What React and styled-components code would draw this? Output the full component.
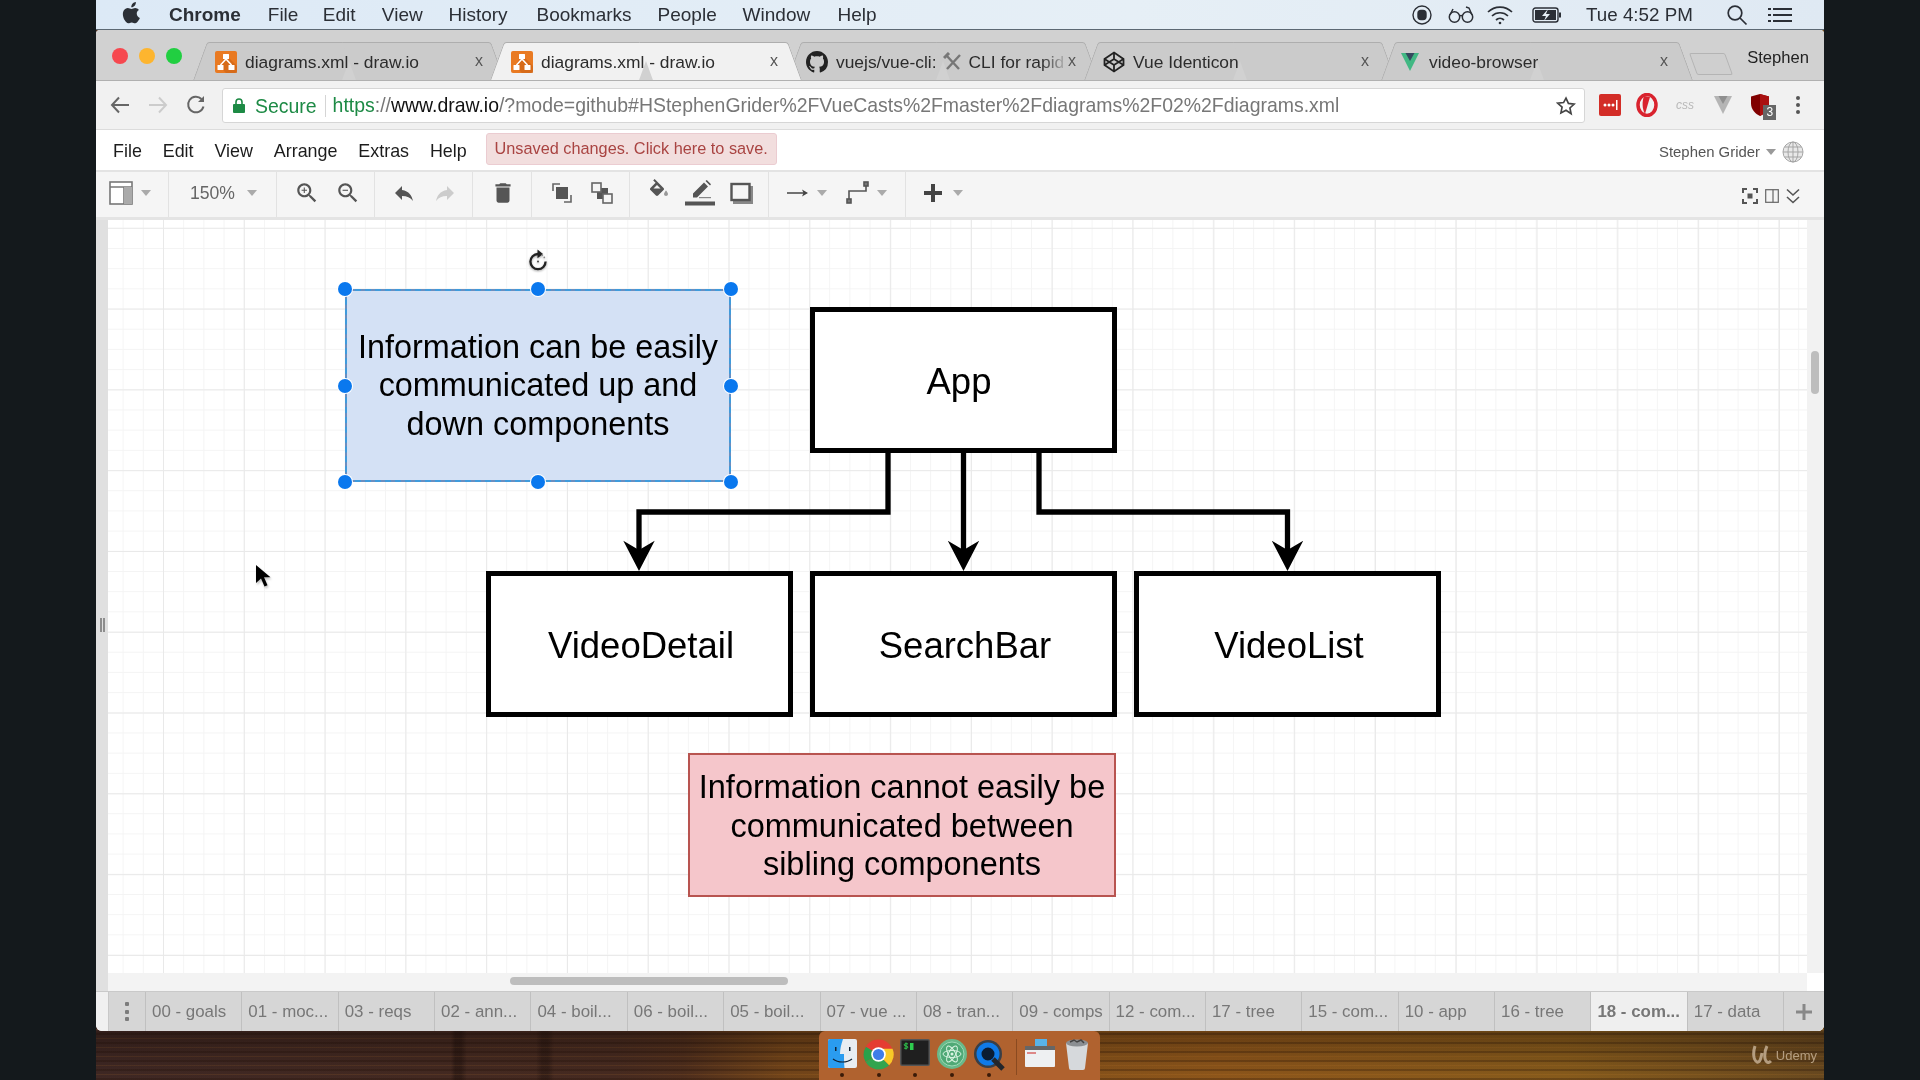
import React from "react";
import styled, { createGlobalStyle } from "styled-components";

const Global = createGlobalStyle`
  html, body { margin: 0; padding: 0; background: #14191c; }
  * { box-sizing: border-box; }
  body { font-family: "Liberation Sans", Arial, sans-serif; }
`;

const Screen = styled.div`
  width: 1920px; height: 1080px; overflow: hidden; background: #14191c;
  display: flex; justify-content: center; position: relative;
`;
const Stage = styled.div`
  width: 1728px; height: 1080px; display: flex; flex-direction: column; position: relative; filter: blur(.45px);
  background:
    linear-gradient(180deg, rgba(0,0,0,0) 0 1030px, rgba(15,6,2,.32) 1032px, rgba(15,6,2,.12) 1058px, rgba(40,10,0,0) 1080px),
    repeating-linear-gradient(0deg, rgba(30,12,4,.26) 0 2px, transparent 2px 5px, rgba(240,150,50,.1) 5px 6px, transparent 6px 9px),
    linear-gradient(90deg, transparent 0 355px, rgba(20,10,8,.4) 359px 365px, transparent 371px 440px, rgba(20,10,8,.35) 446px 452px, transparent 458px),
    linear-gradient(90deg, #3f2824 0%, #472b21 30%, #4e2e1d 34%, #74461a 40%, #82501a 50%, #8f571b 65%, #885c1c 85%, #6a4a20 100%);
`;

/* mac menu bar */
const MenuBar = styled.div`
  height: 30px; flex: none; display: flex; align-items: center; padding-left: 26px; padding-right: 32px;
  background: linear-gradient(90deg, #dce9f6, #e6eff6 60%, #dfe9f3); color: #2b2f36; font-size: 19px;
  border-bottom: 1px solid #5c6873;
`;
const MacItem = styled.span`
  margin-left: ${p => p.$ml}px; font-weight: ${p => (p.$bold ? 700 : 400)}; white-space: nowrap;
`;
const MenuSpacer = styled.span`
  flex: 1;
`;
const StatusSlot = styled.span`
  margin-left: ${p => p.$ml}px; width: ${p => p.$w}px; height: 24px; display: flex; align-items: center; justify-content: center; flex: none;
`;
const Clock = styled.span`
  margin-left: 24px; width: 110px; white-space: nowrap; color: #2b2f36; font-size: 18.8px;
`;

/* browser chrome */
const Window = styled.div`
  flex: none; height: 1001px; display: flex; flex-direction: column; overflow: hidden;
  border-radius: 4px 4px 6px 6px; background: #fff;
`;
const TabStrip = styled.div`
  height: 51px; flex: none; display: flex; align-items: flex-end; background: #d1d1d1; position: relative;
  border-bottom: 1px solid #b0b0b0;
`;
const Lights = styled.div`
  width: 104px; height: 50px; flex: none; display: flex; gap: 11px; padding: 18px 0 0 16px;
`;
const Light = styled.span`
  width: 16px; height: 16px; border-radius: 50%; background: ${p => p.$c};
`;
const Tab = styled.div`
  width: 297px; height: 38px; flex: none; position: relative; display: flex; align-items: center; z-index: ${p => (p.$on ? 2 : 1)};
  padding: 2px 22px 0 ${p => p.$pl}px; color: #2c2c2c; font-size: 17.4px;
  &::before, &::after {
    content: ""; position: absolute; top: 0; bottom: 0; z-index: -1;
    background: ${p => (p.$on ? "#f1f1f1" : "#cbcbcb")}; border-top: 1px solid #aeaeae;
  }
  &::before { left: 0; right: 50%; transform: skewX(-20deg); border-left: 1px solid #aeaeae; border-top-left-radius: 3px; }
  &::after { right: 0; left: 50%; transform: skewX(20deg); border-right: 1px solid #aeaeae; border-top-right-radius: 3px; }
`;
const TabTitle = styled.span`
  margin-left: ${p => p.$ml || 8}px; white-space: nowrap; overflow: hidden; flex: 1; display: flex; align-items: center; gap: 6px;
  ${p => p.$fade && "-webkit-mask-image: linear-gradient(90deg,#000 88%,transparent); mask-image: linear-gradient(90deg,#000 88%,transparent);"}
`;
const TabClose = styled.span`
  position: absolute; right: ${p => p.$r}px; top: 11px; font-size: 16px; color: #555; line-height: 16px;
`;
const NewTab = styled.div`
  width: 36px; height: 22px; margin: 0 0 5px 8px; flex: none; background: #cfcfcf; border: 1px solid #b4b4b4; border-radius: 2px;
  transform: skewX(20deg);
`;
const Profile = styled.div`
  position: absolute; right: 15px; top: 18px; font-size: 16.6px; color: #222;
`;

const AddressRow = styled.div`
  height: 49px; flex: none; display: flex; align-items: center; padding-left: 5px; background: #f1f1f1; border-bottom: 1px solid #dcdcdc;
`;
const NavBtn = styled.div`
  width: 38px; height: 30px; flex: none; display: flex; align-items: center; justify-content: center;
`;
const Omnibox = styled.div`
  margin-left: 7px; width: 1363px; height: 35px; flex: none; background: #fff; border: 1px solid #d6d6d6; border-radius: 3px;
  display: flex; align-items: center; padding: 1px 0 0 10px; font-size: 19.45px; color: #777; white-space: nowrap;
`;
const Secure = styled.span`
  color: #1d8a45; margin-left: 10px; padding-right: 8px; border-right: 1px solid #d5d5d5; line-height: 22px;
`;
const Url = styled.span`
  margin-left: 7px; flex: 1;
`;
const UrlGreen = styled.span` color: #1d8a45; `;
const UrlDark = styled.span` color: #111; `;
const ExtRow = styled.div`
  display: flex; padding-left: 6px; align-items: center;
`;
const ExtSlot = styled.div`
  width: 37.6px; height: 30px; display: flex; align-items: center; justify-content: center; position: relative;
`;
const CssGlyph = styled.span`
  font-size: 12px; color: #b9b9b9; font-style: italic;
`;
const Badge = styled.span`
  position: absolute; left: 22px; top: 15px; width: 13px; height: 15px; background: #666; color: #fff; font-size: 12px; line-height: 15px; text-align: center;
`;

/* draw.io menu */
const AppMenu = styled.div`
  height: 42px; flex: none; display: flex; align-items: center; background: #fff; padding: 0 20px 0 17px; font-size: 17.9px; color: #1c1c1c;
  border-bottom: 2px solid #e3e3e3;
`;
const AppMenuItem = styled.span`
  margin-right: 20.9px; padding-top: 2px;
`;
const Unsaved = styled.div`
  width: 291px; height: 32px; margin-left: -2px; margin-top: -3px; border: 1px solid #ebccd1; border-radius: 3px; background: #f2dede; color: #a94442;
  font-size: 16.3px; display: flex; align-items: center; justify-content: center; white-space: nowrap;
`;
const UserName = styled.span`
  margin-left: auto; font-size: 14.9px; color: #555; display: flex; align-items: center; gap: 6px; margin-top: 4px;
`;

const Toolbar = styled.div`
  height: 48px; flex: none; display: flex; background: #f5f5f5; border-bottom: 3px solid #e4e4e4; color: #555;
`;
const ToolGroup = styled.div`
  width: ${p => p.$w}px; flex: ${p => (p.$grow ? 1 : "none")}; height: 100%; border-right: ${p => (p.$grow ? 0 : "1px solid #e2e2e2")};
  display: flex; align-items: center; padding: 0 ${p => (p.$grow ? 24 : 0)}px 3px ${p => p.$pl}px; gap: ${p => p.$gap || 0}px;
`;
const ZoomLabel = styled.span`
  font-size: 17.6px; color: #666;
`;
const Caret = styled.span`
  width: 0; height: 0; flex: none; border-left: 5px solid transparent; border-right: 5px solid transparent; border-top: 6px solid ${p => p.$c || "#aaa"};
  margin-left: ${p => p.$ml || 0}px;
`;
const ToolSpace = styled.span`
  width: ${p => p.$w}px; flex: none;
`;
const ViewTools = styled.div`
  margin-left: auto; margin-top: 5px; display: flex; align-items: center; gap: 7px;
`;

const Canvas = styled.div`
  flex: 1; position: relative; overflow: hidden;
`;
const Gutter = styled.div`
  position: absolute; left: 0; top: 0; bottom: 0; width: 12px; background: #e0e0e0;
`;
const GutterGrip = styled.span`
  position: absolute; left: 4px; top: 398px; width: 5px; height: 14px; border-left: 2px solid #8d8d8d; border-right: 2px solid #8d8d8d;
`;
const Paper = styled.div`
  position: absolute; left: 12px; top: 0; right: 17px; bottom: 18px; overflow: hidden; background-color: #fff;
  background-image:
    linear-gradient(#e9e9e9 1px, transparent 1px),
    linear-gradient(90deg, #e9e9e9 1px, transparent 1px),
    linear-gradient(#f4f4f4 1px, transparent 1px),
    linear-gradient(90deg, #f4f4f4 1px, transparent 1px);
  background-size: 80.8px 80.8px, 80.8px 80.8px, 20.2px 20.2px, 20.2px 20.2px;
  background-position: 0 7.8px, 55px 0, 0 7.8px, 55px 0;
`;
const RightRail = styled.div`
  position: absolute; right: 0; top: 0; width: 17px; bottom: 18px; background: #f2f2f2;
`;
const RightThumb = styled.div`
  position: absolute; left: 4px; top: 131px; width: 8px; height: 43px; border-radius: 4px; background: #bdbdbd;
`;
const BottomRail = styled.div`
  position: absolute; left: 12px; right: 17px; bottom: 0; height: 18px; background: #f3f3f3;
`;
const BottomThumb = styled.div`
  position: absolute; left: 402px; top: 4px; width: 278px; height: 8px; border-radius: 4px; background: #bdbdbd;
`;
const Shape = styled.div`
  position: absolute; left: ${p => p.$x}px; top: ${p => p.$y}px; width: ${p => p.$w}px; height: ${p => p.$h}px;
  background: ${p => p.$fill || "#fff"}; border: ${p => p.$bw || 5}px solid ${p => p.$stroke || "#000"};
  display: flex; align-items: center; justify-content: center; text-align: center; color: #000;
  font-size: ${p => p.$fs || 36.5}px; line-height: 38.4px; padding: ${p => p.$pad || "5px 0 0 3px"};
`;
const Selection = styled.div`
  position: absolute; inset: -2px;
`;
const SelectionBorder = styled.div`
  position: absolute; inset: 0; border: 2px dashed #3f9bdc;
`;
const Handle = styled.span`
  position: absolute; left: ${p => p.$x}%; top: ${p => p.$y}%; width: 14px; height: 14px; margin: -7px 0 0 -7px; border-radius: 50%;
  background: #0a78ee; box-shadow: 0 0 0 1px #fff;
`;
const Layer = styled.svg`
  position: absolute; left: 0; top: 0; width: 100%; height: 100%;
`;
const RotateSlot = styled.div`
  position: absolute; left: 417px; top: 28px; width: 26px; height: 26px;
`;
const CursorSvg = styled.svg`
  position: absolute; left: 147px; top: 344px; filter: drop-shadow(1px 2px 1px rgba(0,0,0,.25));
`;

const Sheets = styled.div`
  height: 40px; flex: none; display: flex; background: #f0f0f0; padding-left: 12px; border-top: 1px solid #c9c9c9;
`;
const SheetDots = styled.div`
  width: 38px; flex: none; display: flex; flex-direction: column; align-items: center; justify-content: center; gap: 3.5px; background: #d6d6d6; border-right: 1px solid #c0c0c0;
  border-left: 1px solid #c8c8c8;
`;
const Dot = styled.span`
  width: 4px; height: 4px; border-radius: 1px; background: #7c7c7c;
`;
const Sheet = styled.div`
  flex: 1 1 0; min-width: 0; display: flex; align-items: center; padding-left: 6px; font-size: 16.9px; white-space: nowrap; overflow: hidden;
  color: #777; background: ${p => (p.$on ? "#efefef" : "#d6d6d6")}; font-weight: ${p => (p.$on ? 700 : 400)}; border-right: 1px solid #c0c0c0;
`;
const SheetPlus = styled.div`
  width: 40px; flex: none; background: #d6d6d6; display: flex; align-items: center; justify-content: center;
`;

/* dock */
const Dock = styled.div`
  position: absolute; left: 723px; bottom: 0; width: 281px; height: 49px; background: #b0622f; border-radius: 6px 6px 0 0;
  display: flex; padding: 8px 0 0 5px; align-items: flex-start;
`;
const DockItem = styled.div`
  width: ${p => p.$w || 36.6}px; height: 36px; position: relative; display: flex; justify-content: center; flex: none;
  ${p => p.$dot && `&::after { content: ""; position: absolute; left: 50%; top: 34px; width: 4px; height: 4px; margin-left: -2px; border-radius: 50%; background: #3a1a08; }`}
`;
const DockSep = styled.span`
  width: 1px; height: 36px; margin: 0 5px 0 9px; background: #8a4a20; flex: none;
`;
const Watermark = styled.div`
  position: absolute; right: 7px; bottom: 14px; display: flex; align-items: center; gap: 4px; color: #c4ae92; font-size: 13px; opacity: .85;
`;

const DrawIoIcon = () => (
  <svg width="22" height="22" viewBox="0 0 22 22" style={{ flex: "none" }}>
    <rect width="22" height="22" rx="2" fill="#e97a22" />
    <path d="M11 4 22 15v7H11L4 15z" fill="#c95f12" opacity=".55" />
    <rect x="8" y="3" width="6" height="5" fill="#fff" rx=".5" />
    <rect x="2.5" y="14" width="6" height="5" fill="#fff" rx=".5" />
    <rect x="13.5" y="14" width="6" height="5" fill="#fff" rx=".5" />
    <path d="M11 8 5.5 14M11 8l5.5 6" stroke="#fff" strokeWidth="1.6" />
  </svg>
);
const GitHubIcon = () => (
  <svg width="22" height="22" viewBox="0 0 16 16" fill="#222" style={{ flex: "none" }}>
    <path d="M8 0C3.58 0 0 3.58 0 8c0 3.54 2.29 6.53 5.47 7.59.4.07.55-.17.55-.38 0-.19-.01-.82-.01-1.49-2.01.37-2.53-.49-2.69-.94-.09-.23-.48-.94-.82-1.13-.28-.15-.68-.52-.01-.53.63-.01 1.08.58 1.23.82.72 1.21 1.87.87 2.33.66.07-.52.28-.87.51-1.07-1.78-.2-3.64-.89-3.64-3.95 0-.87.31-1.59.82-2.15-.08-.2-.36-1.02.08-2.12 0 0 .67-.21 2.2.82.64-.18 1.32-.27 2-.27s1.36.09 2 .27c1.53-1.04 2.2-.82 2.2-.82.44 1.1.16 1.92.08 2.12.51.56.82 1.27.82 2.15 0 3.07-1.87 3.75-3.65 3.95.29.25.54.73.54 1.48 0 1.07-.01 1.93-.01 2.2 0 .21.15.46.55.38A8.01 8.01 0 0016 8c0-4.42-3.58-8-8-8z" />
  </svg>
);
const Tools = () => (
  <svg width="20" height="20" viewBox="0 0 20 20" fill="none" stroke="#777" strokeWidth="2.4" style={{ flex: "none" }}>
    <path d="M3 3l13 14M17 3 4 17" />
    <path d="M1 6l5-5" strokeWidth="3" />
  </svg>
);
const CodepenIcon = () => (
  <svg width="22" height="22" viewBox="0 0 22 22" fill="none" stroke="#222" strokeWidth="1.8" style={{ flex: "none" }}>
    <path d="M11 1.5 20.5 8v6L11 20.5 1.5 14V8z" />
    <path d="M11 1.5V8M11 14v6.5M1.5 8 11 14l9.5-6M1.5 14 11 8l9.5 6" />
  </svg>
);
const VueIcon = ({ a = "#41b883", b = "#35495e", s = 20 }) => (
  <svg width={s} height={s} viewBox="0 0 20 20" style={{ flex: "none" }}>
    <path d="M1 1h18L10 19z" fill={a} />
    <path d="M5.5 1h9L10 9z" fill={b} />
  </svg>
);
const Mat = ({ d, s = 24, c = "#555", extra, style }) => (
  <svg width={s} height={s} viewBox="0 0 24 24" fill={c} style={{ flex: "none", ...style }}>
    <path d={d} />
    {extra}
  </svg>
);
const ZOOM = "M15.5 14h-.79l-.28-.27C15.41 12.59 16 11.11 16 9.5 16 5.91 13.09 3 9.5 3S3 5.91 3 9.5 5.91 16 9.5 16c1.61 0 3.09-.59 4.23-1.57l.27.28v.79l5 4.99L20.49 19l-4.99-5zm-6 0C7.01 14 5 11.99 5 9.5S7.01 5 9.5 5 14 7.01 14 9.5 11.99 14 9.5 14z";
const UNDO = "M10 9V5l-7 7 7 7v-4.1c5 0 8.5 1.6 11 5.1-1-5-4-10-11-11z";
const TRASH = "M6 19c0 1.1.9 2 2 2h8c1.1 0 2-.9 2-2V7H6v12zM19 4h-3.5l-1-1h-5l-1 1H5v2h14V4z";

const PanelIcon = () => (
  <svg width="24" height="24" viewBox="0 0 24 24" fill="none" style={{ flex: "none" }}>
    <rect x="1" y="1" width="22" height="22" fill="#fff" stroke="#777" strokeWidth="1.6" />
    <path d="M1 6h22M15 6v17" stroke="#777" strokeWidth="1.6" />
    <rect x="15" y="6" width="8" height="17" fill="#aaa" />
  </svg>
);
const ToFront = () => (
  <svg width="24" height="24" viewBox="0 0 24 24" fill="none" stroke="#666" strokeWidth="1.6" style={{ flex: "none" }}>
    <path d="M3 10V3h7M21 14v7h-7" />
    <rect x="6" y="6" width="12" height="12" fill="#555" stroke="none" />
  </svg>
);
const ToBack = () => (
  <svg width="24" height="24" viewBox="0 0 24 24" fill="none" stroke="#666" strokeWidth="1.6" style={{ flex: "none" }}>
    <rect x="7" y="7" width="11" height="11" fill="#555" stroke="none" />
    <rect x="2" y="2" width="9" height="9" fill="#f5f5f5" />
    <rect x="13" y="13" width="9" height="9" fill="#f5f5f5" />
  </svg>
);
const FillIcon = () => (
  <svg width="24" height="24" viewBox="0 0 24 24" fill="#555" style={{ flex: "none", marginTop: -4 }}>
    <path d="M16.56 8.94 7.62 0 6.21 1.41l2.38 2.38-5.15 5.15c-.59.59-.59 1.54 0 2.12l5.5 5.5c.29.29.68.44 1.06.44s.77-.15 1.06-.44l5.5-5.5c.59-.58.59-1.53 0-2.12z" />
    <path d="M6.500 9.500 10 6l3.500 3.500z" fill="#f5f5f5" />
    <path d="M19 11.5s-2 2.17-2 3.5c0 1.1.9 2 2 2s2-.9 2-2c0-1.33-2-3.5-2-3.5z" fill="#999" />
  </svg>
);
const LineIcon = () => (
  <svg width="30" height="26" viewBox="0 0 30 26" fill="#555" style={{ flex: "none" }}>
    <path d="M19 2.5 23 6.5 12 17.5H8v-4zM20.5 1l1.3-1L26 4.2l-1 1.3z" />
    <rect x="14" y="17" width="12" height="1.2" fill="#888" />
    <rect x="0" y="21.5" width="30" height="4" />
  </svg>
);
const ShadowIcon = () => (
  <svg width="24" height="24" viewBox="0 0 24 24" fill="none" style={{ flex: "none" }}>
    <rect x="4" y="5" width="20" height="18" fill="#888" />
    <rect x="2.5" y="3" width="18" height="16" fill="#f5f5f5" stroke="#555" strokeWidth="2.4" />
  </svg>
);
const ArrowLine = () => (
  <svg width="22" height="12" viewBox="0 0 22 12" style={{ flex: "none" }} stroke="#444" fill="#444">
    <path d="M0 6h18" strokeWidth="1.5" />
    <path d="M15 2.5 21 6l-6 3.5 1.5-3.5z" stroke="none" />
  </svg>
);
const Waypoint = () => (
  <svg width="24" height="24" viewBox="0 0 24 24" fill="none" stroke="#555" strokeWidth="1.6" style={{ flex: "none" }}>
    <path d="M3 20V10h17V3" />
    <rect x="1" y="18" width="4" height="4" fill="#777" />
    <rect x="18" y="1" width="4" height="4" fill="#777" />
  </svg>
);
const PlusIcon = () => (
  <svg width="18" height="18" viewBox="0 0 18 18" fill="#444" style={{ flex: "none" }}>
    <path d="M7 0h4v7h7v4h-7v7H7v-7H0V7h7z" />
  </svg>
);
const FitIcon = () => (
  <svg width="16" height="16" viewBox="0 0 16 16" fill="none" stroke="#555" strokeWidth="2" style={{ flex: "none" }}>
    <path d="M1 5V1h4M11 1h4v4M15 11v4h-4M5 15H1v-4" />
    <rect x="5.5" y="5.5" width="5" height="5" fill="#555" stroke="none" />
  </svg>
);
const SplitIcon = () => (
  <svg width="14" height="14" viewBox="0 0 14 14" fill="none" stroke="#666" strokeWidth="1.2" style={{ flex: "none" }}>
    <rect x=".7" y=".7" width="12.6" height="12.6" />
    <path d="M8 .7v12.6" />
  </svg>
);
const Chevrons = () => (
  <svg width="14" height="16" viewBox="0 0 14 16" fill="none" stroke="#555" strokeWidth="1.6" style={{ flex: "none" }}>
    <path d="M1 1.5 7 7l6-5.5M1 9l6 5.5L13 9" />
  </svg>
);
const Globe = () => (
  <svg width="22" height="22" viewBox="0 0 22 22" fill="#e8e8e8" stroke="#a5a5a5" style={{ flex: "none" }}>
    <circle cx="11" cy="11" r="10" />
    <ellipse cx="11" cy="11" rx="5" ry="10" fill="none" />
    <path d="M1 11h20M11 1v20M2.5 6h17M2.5 16h17" fill="none" />
  </svg>
);

const RotateHandle = () => (
  <svg width="26" height="26" viewBox="0 0 26 26" fill="none" style={{ filter: "drop-shadow(0 1px 1px rgba(0,0,0,.35))" }}>
    <path d="M13 6a7.6 7.6 0 1 0 7.6 7.6" stroke="#222" strokeWidth="2.3" />
    <path d="M12.5 1.5 18 6l-5.5 4.2z" fill="#222" />
    <path d="M16.5 6.8a7.6 7.6 0 0 1 3.4 4" stroke="#888" strokeWidth="1.4" strokeDasharray="1.5 1.5" />
    <circle cx="13" cy="13.6" r="1" fill="#444" />
  </svg>
);

const Connector = ({ d, tipX }) => (
  <>
    <path d={d} fill="none" stroke="#000" strokeWidth="5.3" strokeLinejoin="miter" />
    <path d={`M${tipX} 351 L${tipX - 15.7} 320.7 L${tipX} 330 L${tipX + 15.7} 320.7 Z`} fill="#000" />
  </>
);

const macMenus = [["File", 27], ["Edit", 24.4], ["View", 26.3], ["History", 25.8], ["Bookmarks", 28.9], ["People", 26], ["Window", 25.9], ["Help", 27.4]];
const sheets = ["00 - goals", "01 - moc...", "03 - reqs", "02 - ann...", "04 - boil...", "06 - boil...", "05 - boil...", "07 - vue ...", "08 - tran...", "09 - comps", "12 - com...", "17 - tree", "15 - com...", "10 - app", "16 - tree", "18 - com...", "17 - data"];
const handles = [[0, 0], [50, 0], [100, 0], [0, 50], [100, 50], [0, 100], [50, 100], [100, 100]];

export default function App() {
  return (
    <Screen>
      <Global />
      <Stage>
        <MenuBar>
          <svg width="20" height="22" viewBox="0 0 20 24" fill="#2b2f36" style={{ flex: "none", marginTop: -3 }}>
            <path d="M14.2 0c.2 1.6-.4 3-1.3 4.1-.9 1-2.2 1.9-3.7 1.7-.2-1.5.5-3 1.3-4C11.4.8 13 0 14.2 0zM18.6 17.4c-.5 1.1-.7 1.6-1.4 2.6-.9 1.4-2.2 3.2-3.8 3.2-1.4 0-1.8-.9-3.7-.9s-2.3.9-3.7.9c-1.6 0-2.8-1.6-3.7-3C-.3 16-.5 11.500 1 9.200c1.100-1.600 2.800-2.600 4.400-2.600 1.700 0 2.700.9 4.100.9 1.300 0 2.100-.9 4-.9 1.400 0 2.900.8 4 2.100-3.500 1.900-2.900 6.900 1.100 8.700z" />
          </svg>
          <MacItem $ml={27} $bold>Chrome</MacItem>
          {macMenus.map(([m, ml]) => <MacItem key={m} $ml={ml}>{m}</MacItem>)}
          <MenuSpacer />
          <StatusSlot $w={20} $ml={0}>
            <svg width="20" height="20" viewBox="0 0 20 20" fill="none" stroke="#2b2f36" strokeWidth="1.4"><circle cx="10" cy="10" r="9" /><rect x="6" y="5.500" width="8" height="9" rx="3" fill="#2b2f36" /></svg>
          </StatusSlot>
          <StatusSlot $w={26} $ml={16}>
            <svg width="26" height="18" viewBox="0 0 26 18" fill="none" stroke="#2b2f36" strokeWidth="1.5"><circle cx="6.500" cy="11" r="5.200" /><circle cx="19.500" cy="11" r="5.200" /><path d="M11.500 10c1-.8 2-.8 3 0M2 9l3-6M24 9l-3-7-3-1" /></svg>
          </StatusSlot>
          <StatusSlot $w={26} $ml={13}>
            <svg width="26" height="20" viewBox="0 0 26 20" fill="none" stroke="#2b2f36" strokeWidth="1.7"><path d="M1 7a17 17 0 0 1 24 0M5 11a11.500 11.500 0 0 1 16 0M9 15a6 6 0 0 1 8 0" /><circle cx="13" cy="18" r="1.300" fill="#2b2f36" stroke="none" /></svg>
          </StatusSlot>
          <StatusSlot $w={30} $ml={19}>
            <svg width="30" height="16" viewBox="0 0 30 16" fill="none"><rect x="1" y="1" width="25" height="14" rx="2.500" stroke="#2b2f36" strokeWidth="1.400" /><rect x="3" y="3" width="21" height="10" fill="#2b2f36" /><path d="M16 2 10 9h4l-2 5 6-7h-4z" fill="#e6eff6" /><rect x="27" y="5.500" width="2" height="5" fill="#2b2f36" /></svg>
          </StatusSlot>
          <Clock>Tue 4:52 PM</Clock>
          <StatusSlot $w={22} $ml={30}>
            <svg width="22" height="22" viewBox="0 0 22 22" fill="none" stroke="#2b2f36" strokeWidth="1.700"><circle cx="9" cy="9" r="6.800" /><path d="M14 14l6.500 6.500" /></svg>
          </StatusSlot>
          <StatusSlot $w={24} $ml={20}>
            <svg width="24" height="16" viewBox="0 0 24 16" fill="#2b2f36"><rect x="0" y="1" width="3" height="2" /><rect x="5" y="1" width="19" height="2" /><rect x="0" y="7" width="3" height="2" /><rect x="5" y="7" width="19" height="2" /><rect x="0" y="13" width="3" height="2" /><rect x="5" y="13" width="19" height="2" /></svg>
          </StatusSlot>
        </MenuBar>

        <Window>
          <TabStrip>
            <Lights>
              <Light $c="#f6484f" />
              <Light $c="#fdb52f" />
              <Light $c="#21cf41" />
            </Lights>
            <Tab $pl={15}>
              <DrawIoIcon /><TabTitle>diagrams.xml - draw.io</TabTitle><TabClose $r={14}>x</TabClose>
            </Tab>
            <Tab $on $pl={14}>
              <DrawIoIcon /><TabTitle>diagrams.xml - draw.io</TabTitle><TabClose $r={16}>x</TabClose>
            </Tab>
            <Tab $pl={12}>
              <GitHubIcon /><TabTitle $fade>vuejs/vue-cli: <Tools /> CLI for rapid</TabTitle><TabClose $r={15}>x</TabClose>
            </Tab>
            <Tab $pl={12}>
              <CodepenIcon /><TabTitle>Vue Identicon</TabTitle><TabClose $r={19}>x</TabClose>
            </Tab>
            <Tab $pl={12}>
              <VueIcon /><TabTitle $ml={9}>video-browser</TabTitle><TabClose $r={17}>x</TabClose>
            </Tab>
            <NewTab />
            <Profile>Stephen</Profile>
          </TabStrip>

          <AddressRow>
            <NavBtn>
              <svg width="20" height="18" viewBox="0 0 20 18" fill="none" stroke="#666" strokeWidth="2"><path d="M19 9H2M9 1.500 2 9l7 7.500" /></svg>
            </NavBtn>
            <NavBtn>
              <svg width="20" height="18" viewBox="0 0 20 18" fill="none" stroke="#ccc" strokeWidth="2"><path d="M1 9h17M11 1.500 18 9l-7 7.500" /></svg>
            </NavBtn>
            <NavBtn>
              <svg width="20" height="20" viewBox="0 0 20 20" fill="none" stroke="#666" strokeWidth="2"><path d="M17.500 11.500A7.800 7.800 0 1 1 15.500 4" /><path d="M18 1v6h-6z" fill="#666" stroke="none" /></svg>
            </NavBtn>
            <Omnibox>
              <svg width="12" height="15" viewBox="0 0 12 15" fill="#1d8a45" style={{ flex: "none" }}><rect y="6" width="12" height="9" rx="1" /><path d="M3 6V4a3 3 0 0 1 6 0v2" fill="none" stroke="#1d8a45" strokeWidth="1.600" /></svg>
              <Secure>Secure</Secure>
              <Url><UrlGreen>https</UrlGreen>://<UrlDark>www.draw.io</UrlDark>/?mode=github#HStephenGrider%2FVueCasts%2Fmaster%2Fdiagrams%2F02%2Fdiagrams.xml</Url>
              <svg width="20" height="20" viewBox="0 0 24 24" fill="none" stroke="#444" strokeWidth="2" style={{ flex: "none", marginRight: 8 }}><path d="M12 2.500l2.900 6.400 7 .8-5.200 4.700 1.400 6.900L12 17.100l-6.100 3.200 1.400-6.900-5.200-4.700 7-.8z" /></svg>
            </Omnibox>
            <ExtRow>
              <ExtSlot>
                <svg width="22" height="22" viewBox="0 0 22 22"><rect width="22" height="22" rx="2" fill="#d32d27" /><circle cx="6" cy="11" r="1.500" fill="#fff" /><circle cx="10" cy="11" r="1.500" fill="#fff" /><circle cx="14" cy="11" r="1.500" fill="#fff" /><rect x="17" y="6" width="1.500" height="10" fill="#fff" /></svg>
              </ExtSlot>
              <ExtSlot>
                <svg width="22" height="24" viewBox="0 0 22 24"><ellipse cx="11" cy="12" rx="9" ry="10.500" fill="none" stroke="#d9232e" strokeWidth="3.500" /><path d="M8 3c-2 5-2 13 1 18l5-17z" fill="#d9232e" /></svg>
              </ExtSlot>
              <ExtSlot><CssGlyph>css</CssGlyph></ExtSlot>
              <ExtSlot><VueIcon a="#b5b5b5" b="#8f8f8f" s={20} /></ExtSlot>
              <ExtSlot>
                <svg width="20" height="22" viewBox="0 0 20 22"><path d="M10 0l9 2.500v7C19 15 15 20 10 22 5 20 1 15 1 9.500v-7z" fill="#800000" /><path d="M10 0l9 2.500v7C19 15 15 20 10 22z" fill="#a11" /></svg>
                <Badge>3</Badge>
              </ExtSlot>
              <ExtSlot>
                <svg width="4" height="18" viewBox="0 0 4 18" fill="#555"><circle cx="2" cy="2" r="2" /><circle cx="2" cy="9" r="2" /><circle cx="2" cy="16" r="2" /></svg>
              </ExtSlot>
            </ExtRow>
          </AddressRow>

          <AppMenu>
            {["File", "Edit", "View", "Arrange", "Extras", "Help"].map(m => <AppMenuItem key={m}>{m}</AppMenuItem>)}
            <Unsaved>Unsaved changes. Click here to save.</Unsaved>
            <UserName>Stephen Grider <Caret $c="#999" /><Globe /></UserName>
          </AppMenu>

          <Toolbar>
            <ToolGroup $w={73} $pl={13} $gap={8}><PanelIcon /><Caret /></ToolGroup>
            <ToolGroup $w={108} $pl={21} $gap={12}><ZoomLabel>150%</ZoomLabel><Caret /></ToolGroup>
            <ToolGroup $w={98} $pl={17} $gap={15}><Mat d={ZOOM} s={26} extra={<path d="M12 10h-2v2H9v-2H7V9h2V7h1v2h2v1z" />} /><Mat d={ZOOM} s={26} extra={<rect x="7" y="9" width="5" height="1" />} /></ToolGroup>
            <ToolGroup $w={98} $pl={17} $gap={17}><Mat d={UNDO} /><Mat d={UNDO} c="#ccc" style={{ transform: "scaleX(-1)" }} /></ToolGroup>
            <ToolGroup $w={59} $pl={17}><Mat d={TRASH} s={26} /></ToolGroup>
            <ToolGroup $w={98} $pl={18} $gap={16}><ToFront /><ToBack /></ToolGroup>
            <ToolGroup $w={139} $pl={17} $gap={14}><FillIcon /><LineIcon /><ShadowIcon /></ToolGroup>
            <ToolGroup $w={137} $pl={18}>
              <ArrowLine /><Caret $ml={8} /><ToolSpace $w={19} /><Waypoint /><Caret $ml={7} />
            </ToolGroup>
            <ToolGroup $grow $pl={18}>
              <PlusIcon /><Caret $ml={11} />
              <ViewTools><FitIcon /><SplitIcon /><Chevrons /></ViewTools>
            </ToolGroup>
          </Toolbar>

          <Canvas>
            <Gutter><GutterGrip /></Gutter>
            <Paper>
              <Layer>
                <Connector d="M780 232V292H531V335" tipX={531} />
                <Connector d="M855.500 232V335" tipX={855.5} />
                <Connector d="M931 232V292H1179.500V335" tipX={1179.5} />
              </Layer>
              <Shape $x={237} $y={69} $w={386} $h={193} $fill="#d4e1f5" $stroke="#6c8ebf" $bw={2} $fs={32.4} $pad="0">
                Information can be easily<br />communicated up and<br />down components
                <Selection>
                  <SelectionBorder />
                  {handles.map(([x, y]) => <Handle key={`${x}-${y}`} $x={x} $y={y} />)}
                </Selection>
              </Shape>
              <RotateSlot><RotateHandle /></RotateSlot>
              <Shape $x={702} $y={87} $w={307} $h={146} $pad="5px 9px 0 0">App</Shape>
              <Shape $x={378} $y={351} $w={307} $h={146}>VideoDetail</Shape>
              <Shape $x={702} $y={351} $w={307} $h={146}>SearchBar</Shape>
              <Shape $x={1026} $y={351} $w={307} $h={146}>VideoList</Shape>
              <Shape $x={580} $y={533} $w={428} $h={144} $fill="#f5c6cb" $stroke="#b85450" $bw={2.5} $fs={32.5} $pad="2px 0 0">
                Information cannot easily be<br />communicated between<br />sibling components
              </Shape>
              <CursorSvg width="20" height="26" viewBox="0 0 20 26">
                <path d="M1 1v18l5-4.500 3.500 8 3-1.300-3.500-8h6.500z" fill="#000" />
              </CursorSvg>
            </Paper>
            <RightRail><RightThumb /></RightRail>
            <BottomRail><BottomThumb /></BottomRail>
          </Canvas>

          <Sheets>
            <SheetDots><Dot /><Dot /><Dot /></SheetDots>
            {sheets.map((s, i) => <Sheet key={i} $on={i === 15}>{s}</Sheet>)}
            <SheetPlus>
              <svg width="16" height="16" viewBox="0 0 16 16" fill="#888"><path d="M6.500 0h3v6.500H16v3H9.500V16h-3V9.500H0v-3h6.500z" /></svg>
            </SheetPlus>
          </Sheets>
        </Window>

        <Dock>
          <DockItem $dot>
            <svg width="29" height="29" viewBox="0 0 29 29"><rect width="29" height="29" rx="2" fill="#e8edf2" /><path d="M2 0h13c-2 6-3 10-3 15h4c0 5 0 9 .5 14H2a2 2 0 0 1-2-2V2a2 2 0 0 1 2-2z" fill="#2a9cf0" /><path d="M5 20c5 4 14 4 19 0" fill="none" stroke="#123" strokeWidth="1.200" /><rect x="7" y="8" width="1.500" height="4" fill="#123" /><rect x="21" y="8" width="1.500" height="4" fill="#123" /></svg>
          </DockItem>
          <DockItem $dot>
            <svg width="31" height="31" viewBox="0 0 32 32"><circle cx="16" cy="16" r="15.500" fill="#e53c32" /><path d="M16 16 2.600 23.800A15.500 15.500 0 0 1 3 8z" fill="#2aa14a" /><path d="M16 16 2.600 23.800A15.500 15.500 0 0 0 27 27z" fill="#32a44e" /><path d="M16 16l11 11A15.500 15.500 0 0 0 30.500 10H16z" fill="#f8c927" /><circle cx="16" cy="16" r="7.500" fill="#fff" /><circle cx="16" cy="16" r="5.800" fill="#3f7de8" /></svg>
          </DockItem>
          <DockItem $dot>
            <svg width="30" height="27" viewBox="0 0 30 27"><rect width="30" height="27" rx="2" fill="#555" /><rect x="1.500" y="1.500" width="27" height="24" fill="#1f1f1f" /><rect x="10" y="4" width="3.500" height="7" fill="#2ecc4e" /><path d="M4 9c2 1 4 0 4-1s-4-1-4-2 2-2 4-1M6 3.500v7" stroke="#2ecc4e" fill="none" strokeWidth="1" /></svg>
          </DockItem>
          <DockItem $dot>
            <svg width="30" height="30" viewBox="0 0 30 30" fill="none"><circle cx="15" cy="15" r="15" fill="#69b98a" /><circle cx="15" cy="15" r="12" fill="#4fa976" stroke="#9ddab5" /><g stroke="#d8f3e2" strokeWidth="1"><ellipse cx="15" cy="15" rx="9" ry="3.500" /><ellipse cx="15" cy="15" rx="9" ry="3.500" transform="rotate(60 15 15)" /><ellipse cx="15" cy="15" rx="9" ry="3.500" transform="rotate(120 15 15)" /></g><circle cx="15" cy="15" r="1.500" fill="#d8f3e2" /></svg>
          </DockItem>
          <DockItem $dot>
            <svg width="32" height="32" viewBox="0 0 32 32" fill="none"><circle cx="15" cy="15" r="14" fill="#3a3f47" /><circle cx="15" cy="15" r="9" stroke="#0f7ae8" strokeWidth="5" fill="#0b1c33" /><path d="M20 20l10 10" stroke="#23262c" strokeWidth="5" /></svg>
          </DockItem>
          <DockSep />
          <DockItem $w={37}>
            <svg width="30" height="28" viewBox="0 0 30 28"><path d="M10 0h12v8H10z" fill="#59b3e8" /><rect y="7" width="30" height="21" rx="1" fill="#eef0f2" /><rect y="7" width="30" height="4" fill="#666" /><rect x="2" y="13" width="9" height="2" fill="#d88" /></svg>
          </DockItem>
          <DockItem $w={37}>
            <svg width="24" height="31" viewBox="0 0 24 31"><path d="M1 4h22l-3 25a2 2 0 0 1-2 2H6a2 2 0 0 1-2-2z" fill="#d6d9dc" /><ellipse cx="12" cy="4" rx="11" ry="3.500" fill="#8b8f93" /><path d="M5 3l4-2 3 2 4-2 3 3" stroke="#444" fill="none" strokeWidth="1.500" /></svg>
          </DockItem>
        </Dock>
        <Watermark>
          <svg width="20" height="22" viewBox="0 0 20 22" fill="none" stroke="#c4ae92" strokeWidth="3"><path d="M3 2c-2 6-2 14 2 16 3 1 4-4 5-9M15 2c-3 6-3 14 0 16 1 1 3 0 4-1" /></svg>
          Udemy
        </Watermark>
      </Stage>
    </Screen>
  );
}
